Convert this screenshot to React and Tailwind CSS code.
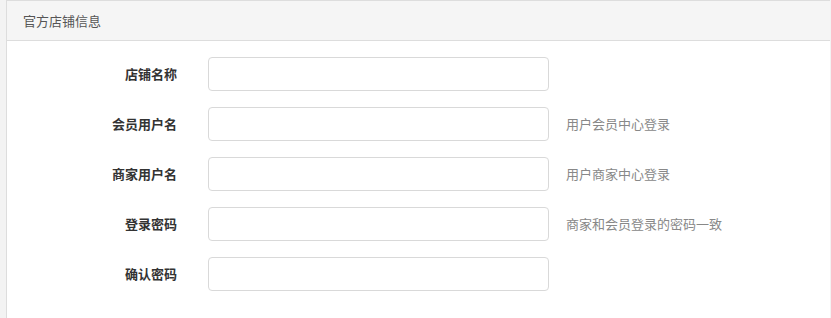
export default function App() {
  const rows = [
    { label: "店铺名称", help: "" },
    { label: "会员用户名", help: "用户会员中心登录" },
    { label: "商家用户名", help: "用户商家中心登录" },
    { label: "登录密码", help: "商家和会员登录的密码一致" },
    { label: "确认密码", help: "" },
  ];
  return (
    <div
      className="w-[831px] h-[318px] bg-[#f3f3f3] pl-[6px] overflow-hidden"
      style={{ fontFamily: '"Noto Sans CJK SC", "Liberation Sans", sans-serif' }}
    >
      <div className="w-[824px] h-[330px] bg-white border-l border-t border-[#dddddd]">
        <div className="h-[40px] bg-[#f5f5f5] border-b border-[#dddddd] flex items-center pl-[16px] text-[13px] text-[#555555]">
          官方店铺信息
        </div>
        <div className="pt-[16px] flex flex-col gap-[16px]">
          {rows.map((r) => (
            <div key={r.label} className="flex items-center h-[34px]">
              <div className="w-[170px] text-right text-[13px] font-bold text-[#333333]">
                {r.label}
              </div>
              <div className="ml-[31px] w-[341px] h-[34px] rounded-[4px] border border-[#d9d9d9] bg-white" />
              {r.help && (
                <div className="ml-[17px] text-[13px] text-[#888888]">{r.help}</div>
              )}
            </div>
          ))}
        </div>
      </div>
    </div>
  );
}
